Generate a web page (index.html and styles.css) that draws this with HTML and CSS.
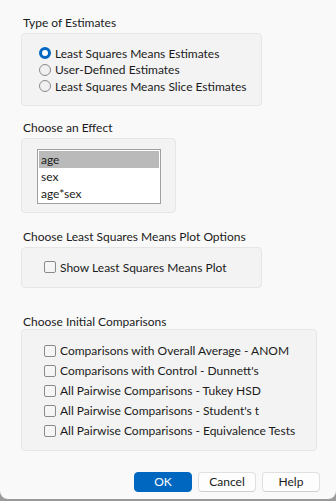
FILE: index.html
```html
<!DOCTYPE html>
<html lang="en">
<head>
	<meta charset="UTF-8">
	<title>Least Squares Means</title>
	<link rel="stylesheet" href="styles.css">
</head>
<body>
	<div class="window">
		<section class="group">
			<h2 class="title">Type of Estimates</h2>
			<div class="box box-radios">
				<label class="row"><input type="radio" name="est" checked><span>Least Squares Means Estimates</span></label>
				<label class="row"><input type="radio" name="est"><span>User-Defined Estimates</span></label>
				<label class="row"><input type="radio" name="est"><span>Least Squares Means Slice Estimates</span></label>
			</div>
		</section>

		<section class="group group-effect">
			<h2 class="title">Choose an Effect</h2>
			<div class="box box-effect">
				<ul class="listbox">
					<li class="selected">age</li>
					<li>sex</li>
					<li>age*sex</li>
				</ul>
			</div>
		</section>

		<section class="group group-plot">
			<h2 class="title">Choose Least Squares Means Plot Options</h2>
			<div class="box box-plot">
				<label class="row"><input type="checkbox"><span>Show Least Squares Means Plot</span></label>
			</div>
		</section>

		<section class="group group-comp">
			<h2 class="title title-tight">Choose Initial Comparisons</h2>
			<div class="box box-comp">
				<label class="row row-tall"><input type="checkbox"><span>Comparisons with Overall Average - ANOM</span></label>
				<label class="row row-tall"><input type="checkbox"><span>Comparisons with Control - Dunnett's</span></label>
				<label class="row row-tall"><input type="checkbox"><span>All Pairwise Comparisons - Tukey HSD</span></label>
				<label class="row row-tall"><input type="checkbox"><span>All Pairwise Comparisons - Student's t</span></label>
				<label class="row row-tall"><input type="checkbox"><span>All Pairwise Comparisons - Equivalence Tests</span></label>
			</div>
		</section>

		<div class="buttons">
			<button class="btn btn-primary">OK</button>
			<button class="btn">Cancel</button>
			<button class="btn">Help</button>
		</div>
	</div>
</body>
</html>
```

FILE: styles.css
```css
	*{
		margin: 0;
		padding: 0;
		box-sizing: border-box;
	}
	html, body{
		background-color: #9a9a9a;
	}
	body{
		font: 12px Lato, 'Noto Sans', sans-serif;
		color: #1b1b1b;
	}
	.window{
		height: 499px;
		padding: 14px 0 0 21px;
		background-color: #f9f9f9;
		border-radius: 0 0 8px 8px;
	}
	.title{
		font-size: 12px;
		font-weight: normal;
		line-height: 16px;
		padding-top: 1px;
		margin: 0 0 2px 2px;
		white-space: nowrap;
	}
	.title-tight{
		margin-bottom: -1px;
	}
	.group-effect{
		margin-top: 13px;
	}
	.group-plot{
		margin-top: 15px;
	}
	.group-comp{
		margin-top: 25px;
	}
	.box{
		background-color: #f3f3f3;
		border: 1px solid #e6e6e6;
		border-radius: 4px;
	}
	.box-radios{
		width: 241px;
		padding: 11px 0 10.5px 17px;
	}
	.box-effect{
		width: 155px;
		padding: 10px 0 8px 15px;
	}
	.box-plot{
		width: 241px;
		padding: 11px 0 11px 22px;
	}
	.box-comp{
		width: 296px;
		padding: 11px 0 9px 22px;
	}
	.row{
		display: flex;
		align-items: center;
		gap: 4px;
		height: 16.5px;
		white-space: nowrap;
	}
	.row-tall{
		height: 20px;
	}
	.row input{
		-webkit-appearance: none;
		appearance: none;
		flex: none;
		width: 12px;
		height: 12px;
		border: 1px solid #8a8a8a;
		background-color: #f0f0f0;
		outline: none;
	}
	.row input[type=radio]{
		border-radius: 50%;
	}
	.row input[type=radio]:checked{
		border: 3px solid #0067c0;
		background-color: #fff;
	}
	.row input[type=checkbox]{
		border-radius: 2px;
		background-color: #f5f5f5;
	}
	.listbox{
		width: 124px;
		list-style-type: none;
		border: 1px solid #a0a0a0;
		background-color: #fff;
		padding: 1px;
	}
	.listbox li{
		height: 17px;
		line-height: 17px;
		padding-left: 2px;
	}
	.listbox li.selected{
		background-color: #bababa;
	}
	.buttons{
		display: flex;
		justify-content: flex-end;
		gap: 6px;
		margin-top: 21px;
		padding-right: 16px;
	}
	.btn{
		width: 58px;
		height: 20px;
		font: inherit;
		color: #1b1b1b;
		background-color: #fdfdfd;
		border: 1px solid #e0e0e0;
		border-bottom-color: #cfcfcf;
		border-radius: 4px;
	}
	.btn-primary{
		background-color: #0067c0;
		border-color: #0067c0;
		color: #fff;
	}
```
